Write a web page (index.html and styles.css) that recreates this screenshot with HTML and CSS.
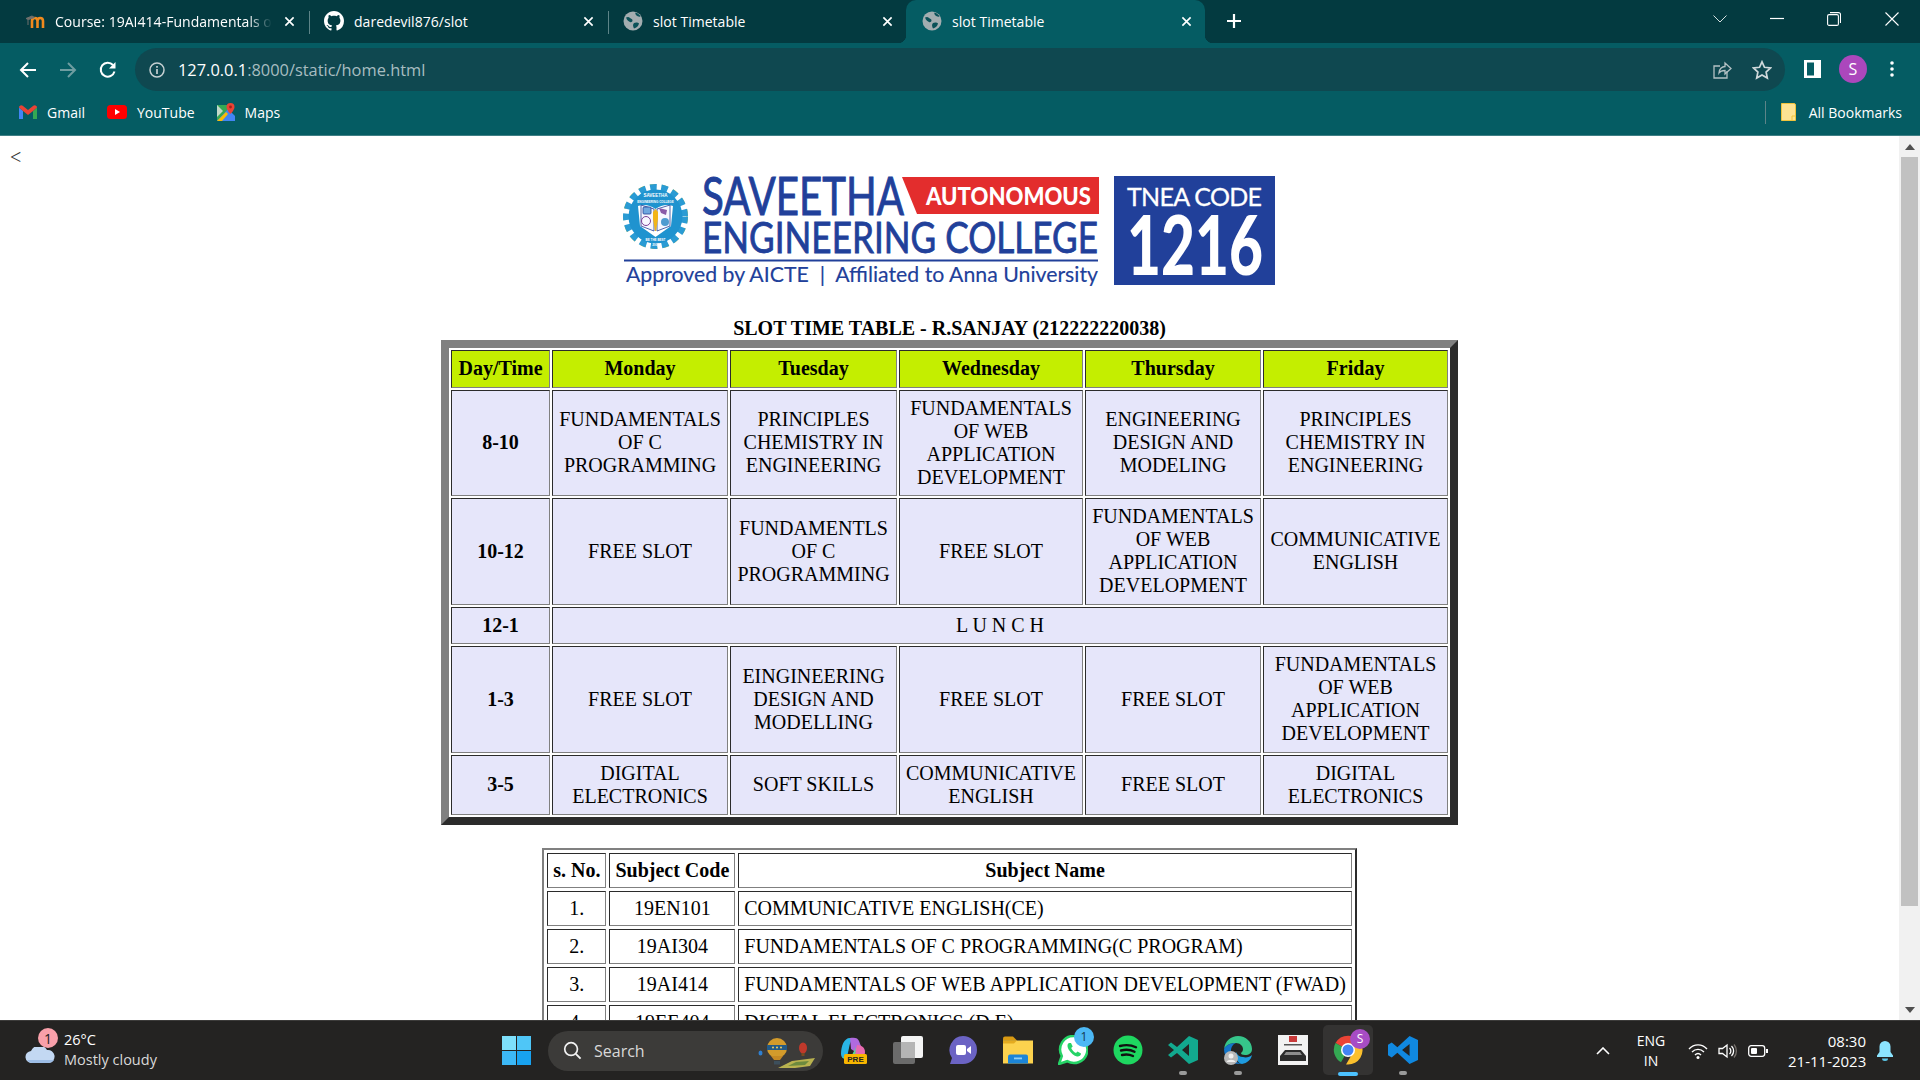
FILE: index.html
```html
<!DOCTYPE html>
<html lang="en">
<head>
<meta charset="utf-8">
<title>slot Timetable</title>
<link rel="stylesheet" href="styles.css">
</head>
<body>
<svg class="defs" aria-hidden="true">
  <symbol id="globe" viewBox="0 0 20 20">
    <circle cx="10" cy="10" r="9.5" fill="#a3adb0"/>
    <path d="M3 6.5c2-1 3-.5 4 .5s2.500 1 2.500 2.500-1.500 2-2.500 1.500S4 9.500 3 6.500zM12.500 1.500c2 .5 4 2 5 4-1.500.5-3 0-4-1s-1.500-2-1-3zM11 12c2-1 4-.5 5 .5-.5 2.500-2.500 4.500-5 5-1-2-1.500-4 0-5.500z" fill="#0b5158"/>
  </symbol>
  <symbol id="close" viewBox="0 0 12 12">
    <path d="M1.500 1.500l9 9M10.500 1.500l-9 9" stroke="#fff" stroke-width="1.800" fill="none"/>
  </symbol>
</svg>
<div class="screen">
  <div class="tabstrip">
    <div class="tab">
      <svg class="favicon" viewBox="0 0 20 20"><path d="M7 17V10c0-2 1-3 2.800-3S12.500 8 12.500 10v7M12.500 10c0-2 1-3 2.700-3S18 8 18 10v7" fill="none" stroke="#f08a1d" stroke-width="2.600"/><path d="M1 7.500l6-2.500 2.500 1.500-6 2zM3 8v6" fill="#70706c" stroke="#70706c" stroke-width="1"/></svg>
      <span class="tab-title fade">Course: 19AI414-Fundamentals of</span>
      <svg class="tab-x"><use href="#close"/></svg>
    </div>
    <div class="tab">
      <svg class="favicon" viewBox="0 0 16 16"><path fill="#fff" d="M8 0C3.580 0 0 3.580 0 8c0 3.540 2.290 6.530 5.470 7.590.4.070.55-.17.55-.38 0-.19-.01-.82-.01-1.490-2.010.37-2.530-.49-2.690-.94-.09-.23-.48-.94-.82-1.130-.28-.15-.68-.52-.01-.53.63-.01 1.080.58 1.230.82.72 1.210 1.870.87 2.330.66.070-.52.28-.87.51-1.070-1.780-.2-3.640-.89-3.640-3.950 0-.87.31-1.590.82-2.150-.08-.2-.36-1.020.08-2.120 0 0 .67-.21 2.200.82.64-.18 1.320-.27 2-.27.68 0 1.360.09 2 .27 1.530-1.040 2.200-.82 2.200-.82.44 1.100.16 1.920.08 2.120.51.56.82 1.270.82 2.150 0 3.070-1.870 3.750-3.650 3.950.29.25.54.73.54 1.480 0 1.070-.01 1.930-.01 2.200 0 .21.15.46.55.38A8.013 8.013 0 0016 8c0-4.420-3.580-8-8-8z"/></svg>
      <span class="tab-title">daredevil876/slot</span>
      <svg class="tab-x"><use href="#close"/></svg>
    </div>
    <div class="tab no-sep">
      <svg class="favicon"><use href="#globe"/></svg>
      <span class="tab-title">slot Timetable</span>
      <svg class="tab-x"><use href="#close"/></svg>
    </div>
    <div class="tab active">
      <svg class="favicon"><use href="#globe"/></svg>
      <span class="tab-title">slot Timetable</span>
      <svg class="tab-x"><use href="#close"/></svg>
    </div>
    <svg class="new-tab" viewBox="0 0 16 16"><path d="M8 1v14M1 8h14" stroke="#fff" stroke-width="2.200"/></svg>
    <div class="win-controls">
      <svg class="wc wc-chev" viewBox="0 0 14 8"><path d="M.5.5L7 7l6.500-6.500" fill="none" stroke="#d5dfe0" stroke-width="1"/></svg>
      <svg class="wc wc-min" viewBox="0 0 14 14"><path d="M0 6.500h14" stroke="#fff" stroke-width="1.200"/></svg>
      <svg class="wc wc-res" viewBox="0 0 14 14"><rect x=".6" y="2.600" width="10.800" height="10.800" rx="1.500" fill="none" stroke="#fff" stroke-width="1.100"/><path d="M3 .6h8.500a2 2 0 012 2V11" fill="none" stroke="#fff" stroke-width="1.100"/></svg>
      <svg class="wc wc-x" viewBox="0 0 14 14"><path d="M.5.5l13 13M13.500.5l-13 13" stroke="#fff" stroke-width="1.100"/></svg>
    </div>
  </div>

  <div class="toolbar">
    <div class="nav">
      <svg class="nav-ic" viewBox="0 0 18 18"><path d="M17 9H2M9 2L2 9l7 7" fill="none" stroke="#fff" stroke-width="2"/></svg>
      <svg class="nav-ic" viewBox="0 0 18 18"><path d="M1 9h15M9 2l7 7-7 7" fill="none" stroke="#6f9da1" stroke-width="2"/></svg>
      <svg class="nav-ic" viewBox="0 0 18 18"><path d="M15.500 10.500A7 7 0 1 1 14 4" fill="none" stroke="#fff" stroke-width="2"/><path d="M16.500 1v6.500H10z" fill="#fff"/></svg>
    </div>
    <div class="omnibox">
      <svg class="info" viewBox="0 0 16 16"><circle cx="8" cy="8" r="7" fill="none" stroke="#c5d0d2" stroke-width="1.500"/><path d="M8 7v5M8 4v1.800" stroke="#c5d0d2" stroke-width="1.700"/></svg>
      <span class="url"><span class="url-host">127.0.0.1</span>:8000/static/home.html</span>
      <svg class="omni-share" viewBox="0 0 20 20"><path d="M15 11v7H2V6h6" fill="none" stroke="#b4c1c4" stroke-width="1.300"/><path d="M7 13c0-4 3-6.500 6-6.500V3l6 5.500L13 14v-3.500c-3 0-5 1-6 2.500z" fill="none" stroke="#b4c1c4" stroke-width="1.300"/></svg>
      <svg class="omni-star" viewBox="0 0 20 20"><path d="M10 1.800l2.500 5.500 6 .7-4.400 4 1.200 6L10 15l-5.300 3 1.200-6-4.400-4 6-.7z" fill="none" stroke="#d0d9db" stroke-width="1.700"/></svg>
    </div>
    <svg class="side-ic" viewBox="0 0 17 18"><path fill="#fff" fill-rule="evenodd" d="M0 0h17v18H0zM3 2.500v13h7v-13z"/></svg>
    <div class="avatar">S</div>
    <svg class="menu-ic" viewBox="0 0 4 16"><circle cx="2" cy="2" r="1.800" fill="#fff"/><circle cx="2" cy="8" r="1.800" fill="#fff"/><circle cx="2" cy="14" r="1.800" fill="#fff"/></svg>
  </div>

  <div class="bookmarks">
    <div class="bm">
      <svg class="bm-ic" viewBox="0 0 18 15"><path d="M0 2.500V14h4V6z" fill="#4285f4"/><path d="M14 6v8h4V2.500z" fill="#34a853"/><path d="M0 2.500C0 .5 2.200-.5 3.700.700L9 5l5.300-4.300C15.800-.5 18 .5 18 2.500L14 6 9 10 4 6z" fill="#ea4335"/></svg>
      <span>Gmail</span>
    </div>
    <div class="bm">
      <svg class="bm-ic bm-yt" viewBox="0 0 20 14"><rect width="20" height="14" rx="3.500" fill="#f00"/><path d="M8 4l5 3-5 3z" fill="#fff"/></svg>
      <span>YouTube</span>
    </div>
    <div class="bm">
      <svg class="bm-ic bm-maps" viewBox="0 0 18 18"><path d="M0 2h11v16H0z" fill="#34a853"/><path d="M0 18L11 6l7 7v5z" fill="#4285f4"/><path d="M0 18L9 9l2 2-6 7z" fill="#fbbc04"/><path d="M0 2l6 6-6 6z" fill="#c3d9c9"/><path d="M13.500 0a4 4 0 00-4 4c0 3 4 7 4 7s4-4 4-7a4 4 0 00-4-4z" fill="#ea4335"/><circle cx="13.500" cy="4" r="1.400" fill="#a3201a"/></svg>
      <span>Maps</span>
    </div>
    <div class="all-bm">
      <svg class="folder-ic" viewBox="0 0 15 18"><path d="M.5.500h12.500a1.500 1.500 0 011.500 1.500v15.500H.5z" fill="#fde293" stroke="#f0c33c"/><path d="M11 17.500V13h3.500" fill="none" stroke="#f0c33c"/></svg>
      <span>All Bookmarks</span>
    </div>
  </div>

  <div class="viewport">
    <main class="page">
      <div class="back">&lt;</div>
      <svg class="logo" viewBox="622 176 655 111" role="img" aria-label="Saveetha Engineering College logo">
        <circle cx="655.500" cy="216.500" r="31.500" fill="none" stroke="#c8c93a" stroke-width="2" stroke-dasharray="6 5.890"/>
        <circle cx="655.500" cy="216.500" r="29" fill="none" stroke="#2a9bd4" stroke-width="7" stroke-dasharray="6.500 4.430"/>
        <circle cx="655.500" cy="216.500" r="27" fill="#1f93cf"/>
        <path d="M638 206q9-3 17.500 3 8.500-6 17.500-3l-2 20-15.500 11-15.500-11z" fill="#fff"/>
        <path d="M641 205l13 4v22l-13-5z" fill="#f7f7ff" stroke="#243f95" stroke-width=".8"/>
        <path d="M670 205l-13 4v22l13-5z" fill="#f7f7ff" stroke="#243f95" stroke-width=".8"/>
        <rect x="643" y="207" width="8" height="7" rx="1" fill="#6fa8df" stroke="#243f95" stroke-width=".8"/>
        <path d="M659 208l8 2-1 5-5-2z" fill="#8a5aa8"/>
        <circle cx="646" cy="221" r="4.500" fill="none" stroke="#7a3f95" stroke-width="1"/>
        <circle cx="665" cy="222" r="4" fill="#4f9bd0"/>
        <path d="M655.500 209l2.500 3v7l-2 12h-1l-2-12v-7z" fill="#f2b519"/>
        <text class="seal seal-a" x="655.500" y="197" text-anchor="middle">SAVEETHA</text>
        <text class="seal seal-b" x="655.500" y="203" text-anchor="middle">ENGINEERING COLLEGE</text>
        <text class="seal seal-b" x="655.500" y="241" text-anchor="middle">BE THE BEST</text>
        <text class="seal seal-b" x="655.500" y="246" text-anchor="middle">2001</text>
        <text class="lg-name" x="702" y="215" textLength="202" lengthAdjust="spacingAndGlyphs">SAVEETHA</text>
        <path d="M902 177h197v37H917z" fill="#e32d2d"/>
        <text class="lg-auto" x="926" y="205" textLength="165" lengthAdjust="spacingAndGlyphs">AUTONOMOUS</text>
        <text class="lg-eng" x="702" y="253" textLength="396" lengthAdjust="spacingAndGlyphs">ENGINEERING COLLEGE</text>
        <rect x="624" y="259.500" width="474" height="2" fill="#21409a"/>
        <text class="lg-sub" x="626" y="282" textLength="472" lengthAdjust="spacingAndGlyphs">Approved by AICTE  |  Affiliated to Anna University</text>
        <rect x="1114" y="176" width="161" height="109" fill="#21409a"/>
        <text class="lg-tnea" x="1127" y="206" textLength="135" lengthAdjust="spacing">TNEA CODE</text>
        <text class="lg-code" x="1127" y="275" textLength="136" lengthAdjust="spacingAndGlyphs">1216</text>
      </svg>
      <h1 class="title">SLOT TIME TABLE - R.SANJAY (212222220038)</h1>

      <table class="timetable">
        <colgroup>
          <col class="c-day"><col class="c-mon"><col class="c-tue"><col class="c-wed"><col class="c-thu"><col class="c-fri">
        </colgroup>
        <tr class="head">
          <th>Day/Time</th><th>Monday</th><th>Tuesday</th><th>Wednesday</th><th>Thursday</th><th>Friday</th>
        </tr>
        <tr>
          <th>8-10</th>
          <td>FUNDAMENTALS OF C PROGRAMMING</td>
          <td>PRINCIPLES CHEMISTRY IN ENGINEERING</td>
          <td>FUNDAMENTALS OF WEB APPLICATION DEVELOPMENT</td>
          <td>ENGINEERING DESIGN AND MODELING</td>
          <td>PRINCIPLES CHEMISTRY IN ENGINEERING</td>
        </tr>
        <tr>
          <th>10-12</th>
          <td>FREE SLOT</td>
          <td>FUNDAMENTLS OF C PROGRAMMING</td>
          <td>FREE SLOT</td>
          <td>FUNDAMENTALS OF WEB APPLICATION DEVELOPMENT</td>
          <td>COMMUNICATIVE ENGLISH</td>
        </tr>
        <tr>
          <th>12-1</th>
          <td colspan="5">L U N C H</td>
        </tr>
        <tr>
          <th>1-3</th>
          <td>FREE SLOT</td>
          <td>EINGINEERING DESIGN AND MODELLING</td>
          <td>FREE SLOT</td>
          <td>FREE SLOT</td>
          <td>FUNDAMENTALS OF WEB APPLICATION DEVELOPMENT</td>
        </tr>
        <tr>
          <th>3-5</th>
          <td>DIGITAL ELECTRONICS</td>
          <td>SOFT SKILLS</td>
          <td>COMMUNICATIVE ENGLISH</td>
          <td>FREE SLOT</td>
          <td>DIGITAL ELECTRONICS</td>
        </tr>
      </table>

      <table class="subjects">
        <tr><th>s. No.</th><th>Subject Code</th><th>Subject Name</th></tr>
        <tr><td>1.</td><td>19EN101</td><td class="name">COMMUNICATIVE ENGLISH(CE)</td></tr>
        <tr><td>2.</td><td>19AI304</td><td class="name">FUNDAMENTALS OF C PROGRAMMING(C PROGRAM)</td></tr>
        <tr><td>3.</td><td>19AI414</td><td class="name">FUNDAMENTALS OF WEB APPLICATION DEVELOPMENT (FWAD)</td></tr>
        <tr><td>4.</td><td>19EE404</td><td class="name">DIGITAL ELECTRONICS (D.E)</td></tr>
      </table>
    </main>
    <div class="scrollbar">
      <div class="sb-btn"><span class="arrow-up"></span></div>
      <div class="sb-thumb"></div>
      <div class="sb-track"></div>
      <div class="sb-btn"><span class="arrow-down"></span></div>
    </div>
  </div>

  <footer class="taskbar">
    <div class="weather">
      <svg class="cloud" viewBox="0 0 30 16"><path d="M7 16a6 6 0 01-1-12 9 9 0 0116-1 6.500 6.500 0 012 13z" fill="#c3d8f2"/><path d="M7 16a6 6 0 01-5-3h27a6 6 0 01-5 3z" fill="#9dbde6"/></svg>
      <span class="wx-badge">1</span>
      <div class="wx-text"><div>26°C</div><div class="wx-sub">Mostly cloudy</div></div>
    </div>
    <svg class="start" viewBox="0 0 29 29"><path d="M0 0h14v14H0z" fill="#7ee0fb"/><path d="M15 0h14v14H15z" fill="#4fc6f7"/><path d="M0 15h14v14H0z" fill="#3cb8f7"/><path d="M15 15h14v14H15z" fill="#18a2f0"/></svg>
    <div class="search">
      <svg class="search-ic" viewBox="0 0 20 20"><circle cx="8.500" cy="8.500" r="6.700" fill="none" stroke="#f2f2f2" stroke-width="1.800"/><path d="M13.500 13.500l5 5" stroke="#f2f2f2" stroke-width="2"/></svg>
      <span>Search</span>
      <svg class="search-art" viewBox="0 0 57 32"><ellipse cx="19" cy="11" rx="10" ry="10" fill="#d39b2b"/><rect x="9" y="8" width="20" height="5" fill="#235a86"/><circle cx="15" cy="10.500" r="1" fill="#f0d060"/><circle cx="19" cy="10.500" r="1" fill="#f0d060"/><circle cx="23" cy="10.500" r="1" fill="#f0d060"/><path d="M13 19h12l-3 4h-6z" fill="#c68a24"/><rect x="16" y="24" width="6" height="3.500" fill="#3d4f5c"/><ellipse cx="2.500" cy="16" rx="2" ry="2.500" fill="#2f7fd0"/><ellipse cx="45" cy="11" rx="4" ry="5.500" fill="#c0392b"/><rect x="43.500" y="16" width="3" height="3" fill="#7a4a20"/><path d="M20 31l14-7 23-3-5 8-15 2z" fill="#b9b24f"/><path d="M30 29l8-4 13-1-4 4z" fill="#6d8a3e"/></svg>
    </div>
    <div class="apps">
      <div class="app">
        <svg viewBox="0 0 30 28"><path d="M3 18c0-8 3-16 9-16h5c-4 1-5 5-6 10l-2 9c-1 3-6 2-6-3z" fill="#29b5e8"/><path d="M12 2c5-1 8 0 9 3l3 8c1 4-2 6-5 4l-6-4z" fill="#b06adf"/><path d="M19 9c5 0 8 3 8 7 0 2-1 5-4 5h-7z" fill="#e86ab0"/><path d="M4 21c3 3 8 2 10-2l4-8-1 10z" fill="#5ed39a"/><rect x="6" y="18" width="23" height="10" rx="1.500" fill="#f8b500"/><text class="pre" x="17.500" y="26" text-anchor="middle">PRE</text></svg>
      </div>
      <div class="app">
        <svg viewBox="0 0 30 28"><rect width="22" height="22" x="8" y="0" rx="2" fill="#f4f4f4"/><rect width="22" height="22" x="0" y="6" rx="2" fill="#6b6b6b"/><rect width="14" height="16" x="8" y="6" fill="#b5b5b5"/></svg>
      </div>
      <div class="app">
        <svg viewBox="0 0 30 30"><path d="M15 1a14 14 0 110 28H2l2-6A14 14 0 0115 1z" fill="#6b63c4"/><rect x="8" y="10" width="10" height="10" rx="2" fill="#fff"/><path d="M19 14l4-3v8l-4-3z" fill="#fff"/></svg>
      </div>
      <div class="app">
        <svg viewBox="0 0 30 27"><path d="M0 2a2 2 0 012-2h8l4 4h-14z" fill="#d99a12"/><path d="M0 4h30v23H0z" fill="#fcd24e"/><path d="M0 4h14l-3 3H0z" fill="#e4ab20"/><path d="M7 18h16a2 2 0 012 2v7H5v-7a2 2 0 012-2z" fill="#1c85d8"/><rect x="11" y="21" width="8" height="1.800" fill="#8fd0f7"/></svg>
      </div>
      <div class="app">
        <svg viewBox="0 0 30 30"><path d="M16 1a13.500 13.500 0 11-6.800 25.200L1 29l2.800-8A13.500 13.500 0 0116 1z" fill="#fff" stroke="#25d366" stroke-width="2.500"/><path d="M11 8c-2 1-2 4 0 7s5 6 8 6.500c2 .3 4-1 4-3l-3.500-2-1.500 1.500c-2-.7-4-3-4.800-5l1.500-1.500L13 8z" fill="#25d366"/></svg>
        <span class="badge wa-badge">1</span>
      </div>
      <div class="app">
        <svg viewBox="0 0 30 30"><circle cx="15" cy="15" r="14.500" fill="#1ed760"/><path d="M7 11c6-1.600 11-1.200 16 1.300M8 15.500c5-1.300 9.500-.9 13.500 1.200M9 20c4-1 7.500-.7 11 1" fill="none" stroke="#111" stroke-width="2.400" stroke-linecap="round"/></svg>
      </div>
      <div class="app running">
        <svg viewBox="0 0 30 28"><path d="M21 0l9 4v20l-9 4-12-11-6 4.500L0 19l6-5-6-5 3-2.500 6 4.500zM21 8l-7 6 7 6z" fill="#12a98f" fill-rule="evenodd"/></svg>
      </div>
      <div class="app running">
        <svg viewBox="0 0 30 30"><path d="M1 14C2 6 8 1 15 1c8 0 14 6 14 13 0 4-3 6-7 6-3 0-4-1-4-2 1-1 2-2 2-4 0-3-3-6-7-6C8 8 3 10 1 14z" fill="#36c58a"/><path d="M1 14c2-4 7-6 12-6-3 1-5 4-5 8 0 6 5 12 11 13C9 30 1 24 1 14z" fill="#1475c8"/><path d="M19 29c5-1 9-4 10-9-2 2-6 3-9 2-3 0-6-2-7-5-1 5 1 11 6 12z" fill="#1e9be0"/><circle cx="8" cy="23" r="7" fill="#b8b8b8"/><circle cx="8" cy="21" r="2.500" fill="#eee"/><path d="M3.500 27c1-3 8-3 9 0z" fill="#eee"/></svg>
      </div>
      <div class="app">
        <svg viewBox="0 0 30 30"><rect width="30" height="30" fill="#f2f2f2"/><rect x="11" y="1" width="8" height="6" fill="#c83a3a"/><rect x="6" y="9" width="18" height="1.500" fill="#555"/><path d="M2 21l5-6h16l5 6v5H2z" fill="#2b2b2b"/><path d="M8 17h14l2 3H6z" fill="#8d8d8d"/></svg>
      </div>
      <div class="app active">
        <svg viewBox="0 0 30 30"><path d="M15 15L2.500 8A14.500 14.500 0 0128 8.500H15z" fill="#ea4335"/><path d="M15 15l-7 12.300A14.500 14.500 0 012.500 8z" fill="#34a853"/><path d="M15 8.500h13A14.500 14.500 0 0115 29.500h-2l7-12z" fill="#fbc02d"/><circle cx="15" cy="15" r="7" fill="#fff"/><circle cx="15" cy="15" r="5.500" fill="#4285f4"/></svg>
        <span class="badge ch-badge">S</span>
      </div>
      <div class="app running">
        <svg viewBox="0 0 32 32"><path d="M23 1l9 4.300v21.400L23 31 10 19l-6 5-4-2.400V10.400L4 8l6 5zM23 9.500L15 16l8 6.500z" fill="#1088e0" fill-rule="evenodd"/></svg>
      </div>
    </div>
    <div class="tray">
      <svg class="tray-chev" viewBox="0 0 14 8"><path d="M1 7l6-6 6 6" fill="none" stroke="#fff" stroke-width="1.600"/></svg>
      <div class="lang"><div>ENG</div><div>IN</div></div>
      <svg class="tray-ic" viewBox="0 0 20 16"><path d="M1 6c5-5.500 13-5.500 18 0M4 9c3.500-3.500 8.500-3.500 12 0M7 12c2-2 4-2 6 0" fill="none" stroke="#fff" stroke-width="1.400"/><circle cx="10" cy="14.500" r="1.500" fill="#fff"/></svg>
      <svg class="tray-ic" viewBox="0 0 20 16"><path d="M1 5.500h3.500L9 2v12l-4.500-3.500H1z" fill="none" stroke="#fff" stroke-width="1.300"/><path d="M11.500 5a4 4 0 010 6M13.500 3a7 7 0 010 10" fill="none" stroke="#fff" stroke-width="1.300"/><path d="M16 1.500a10 10 0 010 13" fill="none" stroke="#77716c" stroke-width="1.300"/></svg>
      <svg class="tray-ic" viewBox="0 0 20 14"><rect x=".7" y="1.700" width="16" height="10.600" rx="2.500" fill="none" stroke="#fff" stroke-width="1.300"/><rect x="3" y="4" width="6" height="6" rx="1" fill="#fff"/><path d="M18 5h2v4h-2z" fill="#fff"/></svg>
      <div class="clock"><div>08:30</div><div>21-11-2023</div></div>
      <svg class="bell" viewBox="0 0 16 20"><path d="M8 0a5.500 5.500 0 00-5.500 5.500V11L0 14.500V16h16v-1.500L13.500 11V5.500A5.500 5.500 0 008 0z" fill="#8be4ff"/><path d="M5 17.500h6a3 2.500 0 01-6 0z" fill="#5cc8ea"/></svg>
    </div>
  </footer>
</div>
</body>
</html>
```

FILE: styles.css
```css
* { box-sizing: border-box; }
html, body { margin: 0; height: 100%; overflow: hidden; }
body { font-family: "Open Sans", "Noto Sans", sans-serif; }
.defs { display: none; }
.screen { width: 1920px; height: 1080px; display: flex; flex-direction: column; background: #fff; }

/* tab strip */
.tabstrip { height: 43px; flex: none; background: #033a40; display: flex; padding-left: 9px; color: #fff; font-size: 14px; }
.tab { position: relative; width: 299px; height: 43px; display: flex; align-items: center; padding: 0 0 1px 16px; }
.tab::after { content: ""; position: absolute; right: -2px; top: 11px; width: 1px; height: 23px; background: #5d8488; }
.tab.no-sep::after, .tab.active::after { display: none; }
.tab.active { background: #055c63; border-radius: 10px 10px 0 0; }
.tab.active::before, .tab.active::after { display: block; content: ""; position: absolute; bottom: 0; top: auto; width: 8px; height: 8px; }
.tab.active::before { left: -8px; right: auto; background: radial-gradient(circle at 0 0, transparent 8px, #055c63 8.500px); }
.tab.active::after { right: -8px; background: radial-gradient(circle at 100% 0, transparent 8px, #055c63 8.500px); }
.favicon { width: 20px; height: 20px; flex: none; margin-right: 10px; }
.tab-title { width: 219px; overflow: hidden; white-space: nowrap; letter-spacing: .03px; }
.fade { -webkit-mask-image: linear-gradient(90deg, #000 88%, transparent 99%); mask-image: linear-gradient(90deg, #000 88%, transparent 99%); }
.tab-x { width: 11px; height: 11px; flex: none; margin-left: 10px; }
.new-tab { width: 16px; height: 16px; margin: 13px 0 0 21px; }
.win-controls { margin-left: auto; display: flex; align-items: flex-start; padding-right: 21px; }
.wc { flex: none; }
.wc-chev { width: 14px; height: 8px; margin-top: 15px; }
.wc-min { width: 14px; height: 14px; margin: 12px 0 0 43px; }
.wc-res { width: 14px; height: 14px; margin: 12px 0 0 43px; }
.wc-x { width: 14px; height: 14px; margin: 12px 0 0 44px; }

/* toolbar */
.toolbar { height: 48px; flex: none; background: #055c63; display: flex; padding: 5px 0 0 19px; color: #fff; }
.nav { display: flex; align-items: center; gap: 22px; }
.nav-ic { width: 18px; height: 18px; }
.omnibox { width: 1650px; height: 43px; margin-left: 18px; background: #0f4850; border-radius: 22px; display: flex; align-items: center; padding: 0 13px 0 14px; }
.info { width: 16px; height: 16px; flex: none; }
.url { margin-left: 13px; font-size: 16.400px; color: #a7bdc0; white-space: nowrap; }
.url-host { color: #fff; }
.omni-share { width: 20px; height: 20px; margin-left: auto; }
.omni-star { width: 20px; height: 20px; margin-left: 20px; }
.side-ic { width: 17px; height: 18px; margin: 12px 0 0 19px; }
.avatar { width: 28px; height: 28px; margin: 7px 0 0 18px; border-radius: 50%; background: #ab47bc; display: flex; align-items: center; justify-content: center; font-size: 16px; }
.menu-ic { width: 4px; height: 16px; margin: 13px 0 0 23px; }

/* bookmarks */
.bookmarks { height: 45px; flex: none; background: #055c63; border-bottom: 1px solid #3f7f85; display: flex; align-items: center; color: #fff; font-size: 14px; padding: 0 0 2px 19px; }
.bm { display: flex; align-items: center; gap: 10px; margin-right: 22px; }
.bm-ic { width: 18px; height: 15px; }
.bm-yt { width: 20px; height: 14px; }
.bm-maps { height: 18px; }
.all-bm { margin-left: auto; display: flex; align-items: center; gap: 13px; padding: 0 18px 0 15px; height: 23px; border-left: 1px solid #5d8488; }
.folder-ic { width: 15px; height: 18px; }

/* page */
.viewport { flex: 1; min-height: 0; display: flex; }
.page { flex: 1; min-width: 0; overflow: hidden; padding: 8px; font-family: "Liberation Serif", serif; font-size: 20px; line-height: 23px; color: #000; }
.back { height: 23px; padding: 2px 0 0 2px; color: #333; }
.logo { display: block; width: 655px; height: 111px; margin: 9px auto 0; }
.seal { font-family: "Liberation Sans", sans-serif; fill: #fff; font-weight: 700; }
.seal-a { font-size: 4.500px; }
.seal-b { font-size: 3px; }
.lg-name, .lg-eng, .lg-sub { font-family: "Lato", sans-serif; fill: #21409a; stroke: #21409a; }
.lg-name { font-size: 52px; stroke-width: .9px; }
.lg-eng { font-size: 42px; stroke-width: .8px; }
.lg-sub { font-size: 21px; stroke-width: .15px; white-space: pre; }
.lg-auto { font-family: "Lato", sans-serif; font-weight: 900; font-size: 25px; fill: #fff; }
.lg-tnea { font-family: "Lato", sans-serif; font-size: 25px; fill: #fff; stroke: #fff; stroke-width: .3px; }
.lg-code { font-family: "Lato", sans-serif; font-weight: 900; font-size: 82px; fill: #fff; }
.title { margin: 30px 0 0; font-size: 20px; line-height: 23px; font-weight: 700; text-align: center; }

.timetable, .subjects { margin-left: auto; margin-right: auto; border-style: solid; border-color: #808080 #2b2b2b #2b2b2b #808080; }
.timetable { table-layout: fixed; width: 1017px; border-width: 8px; border-spacing: 2px; border-collapse: separate; }
.c-day { width: 99px; }
.c-mon { width: 176px; }
.c-tue { width: 167px; }
.c-wed { width: 184px; }
.c-thu { width: 176px; }
.c-fri { width: 185px; }
.timetable th, .timetable td, .subjects th, .subjects td { border: 1px solid; border-color: #2b2b2b #808080 #808080 #2b2b2b; text-align: center; vertical-align: middle; }
.timetable th, .timetable td { padding: 6.250px 6px; background: #e6e6fa; }
.timetable .head th { background: #c4ee00; }
.subjects { margin-top: 23px; border-width: 2px; border-spacing: 3px; border-collapse: separate; }
.subjects th, .subjects td { padding: 5px; white-space: nowrap; }
.subjects .name { text-align: left; }

/* scrollbar */
.scrollbar { width: 21px; flex: none; background: #f1f1f1; display: flex; flex-direction: column; align-items: center; }
.sb-btn { height: 21px; flex: none; display: flex; align-items: center; justify-content: center; }
.arrow-up { border: 5px solid transparent; border-top: 0; border-bottom: 6px solid #505050; }
.arrow-down { border: 5px solid transparent; border-bottom: 0; border-top: 6px solid #505050; }
.sb-thumb { width: 17px; height: 749px; flex: none; background: #c1c1c1; }
.sb-track { flex: 1; }

/* taskbar */
.taskbar { height: 60px; flex: none; background: #242322; border-top: 1px solid #3c3b3a; display: flex; align-items: center; color: #fff; }
.weather { position: relative; width: 502px; height: 59px; flex: none; display: flex; align-items: center; padding: 0 0 2px 64px; font-size: 14.500px; }
.cloud { position: absolute; left: 25px; top: 26px; width: 30px; height: 16px; }
.wx-badge { position: absolute; left: 38px; top: 7px; width: 20px; height: 20px; border-radius: 50%; background: #f9a0aa; color: #222; font-size: 14px; display: flex; align-items: center; justify-content: center; }
.wx-text { line-height: 20px; }
.wx-sub { color: #d9d9d9; }
.start { width: 29px; height: 29px; flex: none; }
.search { width: 275px; height: 40px; flex: none; margin-left: 17px; background: #3c3b39; border-radius: 20px; display: flex; align-items: center; padding-left: 15px; font-size: 16px; color: #d8d8d8; position: relative; }
.search-ic { width: 19px; height: 19px; margin-right: 12px; }
.search-art { position: absolute; right: 8px; top: 6px; width: 57px; height: 32px; }
.apps { display: flex; gap: 25px; margin: -2px 0 0 15px; }
.app { position: relative; width: 30px; height: 30px; display: flex; align-items: center; justify-content: center; }
.app svg { width: 30px; height: 30px; display: block; }
.app svg text.pre { font-family: "Liberation Sans", sans-serif; font-weight: 700; font-size: 8px; fill: #222; }
.app.running::after, .app.active::after { content: ""; position: absolute; bottom: -10px; left: 11px; width: 8px; height: 4px; border-radius: 2px; background: #9a9a9a; }
.app.active::before { content: ""; position: absolute; left: -10px; top: -10px; width: 50px; height: 50px; border-radius: 5px; background: #343332; }
.app.active svg { position: relative; }
.app.active::after { left: 5px; width: 20px; background: #4cc2ff; bottom: -11px; }
.badge { position: absolute; width: 20px; height: 20px; border-radius: 50%; display: flex; align-items: center; justify-content: center; font-size: 12px; color: #fff; }
.wa-badge { left: 16px; top: -8px; background: #4cb8f5; color: #143a50; }
.ch-badge { left: 17px; top: -6px; background: #a74cc4; }
.tray { margin-left: auto; display: flex; align-items: center; font-size: 14px; padding-right: 27px; }
.tray-chev { width: 14px; height: 8px; margin-right: 26px; }
.lang { width: 30px; text-align: center; line-height: 20px; margin-right: 22px; }
.tray-ic { width: 20px; height: 16px; margin-right: 10px; }
.clock { width: 78px; margin-left: 10px; font-size: 15px; text-align: right; line-height: 20px; white-space: nowrap; }
.bell { width: 16px; height: 20px; margin-left: 11px; }
```
